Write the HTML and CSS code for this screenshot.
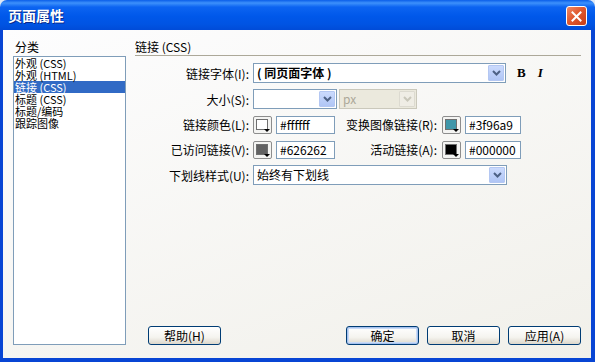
FILE: index.html
```html
<!DOCTYPE html>
<html>
  <head>
    <title>页面属性</title>
    <meta charset="UTF-8" />
    <link rel="stylesheet" href="styles.css">
  </head>
  <body>
    <div class="window">
      <div class="titlebar">
        <span class="title">页面属性</span>
        <button class="close" title="关闭">
          <svg width="11" height="11" viewBox="0 0 11 11"><path d="M1.5 1.5 L9.5 9.5 M9.5 1.5 L1.5 9.5" stroke="#fff" stroke-width="2" stroke-linecap="square" fill="none"/></svg>
        </button>
      </div>

      <div class="client">
        <div class="sidebar">
          <div class="caption">分类</div>
          <ul class="listbox">
            <li>外观 (CSS)</li>
            <li>外观 (HTML)</li>
            <li class="selected">链接 (CSS)</li>
            <li>标题 (CSS)</li>
            <li>标题/编码</li>
            <li>跟踪图像</li>
          </ul>
        </div>

        <div class="panel">
          <div class="panel-head">链接 (CSS)</div>

          <div class="form">
            <div class="row">
              <label class="label">链接字体(I):</label>
              <div class="select font-select">
                <span class="value bold">( 同页面字体 )</span>
                <span class="arrow"><svg width="9" height="6" viewBox="0 0 9 6"><path d="M1 1 L4.5 4.5 L8 1" stroke="#4d6185" stroke-width="2" fill="none"/></svg></span>
              </div>
              <span class="fmt-b">B</span>
              <span class="fmt-i">I</span>
            </div>

            <div class="row">
              <label class="label">大小(S):</label>
              <div class="select size-select">
                <span class="value"></span>
                <span class="arrow"><svg width="9" height="6" viewBox="0 0 9 6"><path d="M1 1 L4.5 4.5 L8 1" stroke="#4d6185" stroke-width="2" fill="none"/></svg></span>
              </div>
              <div class="select unit-select">
                <span class="value">px</span>
                <span class="arrow"><svg width="9" height="6" viewBox="0 0 9 6"><path d="M1 1 L4.5 4.5 L8 1" stroke="#c9c7ba" stroke-width="2" fill="none"/></svg></span>
              </div>
            </div>

            <div class="row short">
              <label class="label">链接颜色(L):</label>
              <span class="swatch"><i style="background:#ffffff"></i></span>
              <input class="hex" type="text" value="#ffffff" readonly />
              <label class="label2">变换图像链接(R):</label>
              <span class="swatch"><i style="background:#3f96a9"></i></span>
              <input class="hex hex2" type="text" value="#3f96a9" readonly />
            </div>

            <div class="row short">
              <label class="label">已访问链接(V):</label>
              <span class="swatch"><i style="background:#626262"></i></span>
              <input class="hex" type="text" value="#626262" readonly />
              <label class="label2">活动链接(A):</label>
              <span class="swatch"><i style="background:#000000"></i></span>
              <input class="hex hex2" type="text" value="#000000" readonly />
            </div>

            <div class="row">
              <label class="label">下划线样式(U):</label>
              <div class="select under-select">
                <span class="value">始终有下划线</span>
                <span class="arrow"><svg width="9" height="6" viewBox="0 0 9 6"><path d="M1 1 L4.5 4.5 L8 1" stroke="#4d6185" stroke-width="2" fill="none"/></svg></span>
              </div>
            </div>
          </div>

          <div class="buttons">
            <button class="btn help">帮助(H)</button>
            <button class="btn default">确定</button>
            <button class="btn">取消</button>
            <button class="btn">应用(A)</button>
          </div>
        </div>
      </div>
    </div>
  </body>
</html>
```

FILE: styles.css
```css
* {
  box-sizing: border-box;
}
body {
  margin: 0;
  background: #dfe8f5;
  font-family: "Noto Sans CJK SC", "Noto Sans", sans-serif;
  font-size: 12px;
  color: #000;
}
.window {
  width: 595px;
  height: 362px;
  display: flex;
  flex-direction: column;
}
.titlebar {
  height: 30px;
  display: flex;
  align-items: flex-start;
  justify-content: space-between;
  padding: 5px 8px 0 8px;
  border-radius: 7px 7px 0 0;
  background: linear-gradient(#0a5ee9 0, #3d91fb 3px, #0c64f1 7px, #0058ea 16px, #0054e3 24px, #004bd8 30px);
}
.title {
  color: #fff;
  font-weight: bold;
  font-size: 14px;
  line-height: 20px;
  text-shadow: 1px 1px #0a2a8a;
}
.close {
  width: 21px;
  height: 20px;
  margin-top: 1px;
  padding: 0;
  border: 1px solid #fff;
  border-radius: 3px;
  background: linear-gradient(135deg, #f08a66, #e0592f 45%, #c73d18);
  display: flex;
  align-items: center;
  justify-content: center;
}
.client {
  flex: 1;
  display: flex;
  gap: 9px;
  padding: 8px 10px 13px 10px;
  background: linear-gradient(160deg, #fdfdfe, #f1f0ea);
  border: solid #0845d4;
  border-width: 0 4px 4px 3px;
}
.sidebar {
  width: 113px;
  display: flex;
  flex-direction: column;
}
.caption {
  height: 18px;
  line-height: 18px;
  padding-left: 2px;
}
.listbox {
  flex: 1;
  margin: 0;
  padding: 0;
  list-style: none;
  background: #fff;
  border: 1px solid #7f9db9;
}
.listbox li {
  height: 12px;
  line-height: 12px;
  padding-left: 1px;
  font-size: 11px;
  white-space: nowrap;
}
.listbox li.selected {
  background: #316ac5;
  color: #fff;
}
.panel {
  flex: 1;
  display: flex;
  flex-direction: column;
}
.panel-head {
  height: 18px;
  line-height: 17px;
  border-bottom: 1px solid #aca899;
}
.form {
  margin-top: 7px;
  display: flex;
  flex-direction: column;
  gap: 6px;
}
.row {
  display: flex;
  align-items: center;
  height: 20px;
}
.row.short {
  height: 19px;
}
.label {
  width: 114px;
  margin-right: 4px;
  text-align: right;
  white-space: nowrap;
}
.label2 {
  width: 102px;
  margin-right: 5px;
  text-align: right;
  white-space: nowrap;
}
.select {
  display: flex;
  align-items: center;
  height: 20px;
  padding-left: 3px;
  border: 1px solid #7f9db9;
  background: #fff;
}
.select .value {
  line-height: 18px;
}
.select .value.bold {
  font-weight: bold;
}
.select .arrow {
  margin-left: auto;
  margin-right: 1px;
  width: 16px;
  height: 16px;
  border: 1px solid #b4c7f2;
  border-radius: 1px;
  background: linear-gradient(#cbdafd, #b0c5f5);
  display: flex;
  align-items: center;
  justify-content: center;
}
.font-select {
  width: 253px;
}
.size-select {
  width: 84px;
}
.unit-select {
  width: 78px;
  margin-left: 2px;
  background: #ebe9dd;
  border-color: #cac8bb;
  color: #aca899;
}
.unit-select .arrow {
  background: #efede5;
  border-color: #dcdad0;
}
.under-select {
  width: 254px;
}
.fmt-b {
  margin-left: 11px;
  font-family: "Liberation Serif", serif;
  font-weight: bold;
  font-size: 13px;
}
.fmt-i {
  margin-left: 12px;
  font-family: "Liberation Serif", serif;
  font-weight: bold;
  font-style: italic;
  font-size: 13px;
}
.swatch {
  position: relative;
  width: 19px;
  height: 18px;
  padding: 2px 3px 3px 2px;
  border: 1px solid #8d8d8d;
  border-radius: 2px;
  background: #f4f4f2;
}
.swatch i {
  display: block;
  height: 100%;
  border: 1px solid #6f6f6f;
}
.swatch::after {
  content: "";
  position: absolute;
  right: 1px;
  bottom: 1px;
  border-left: 3px solid transparent;
  border-right: 3px solid transparent;
  border-top: 3px solid #000;
}
.hex {
  width: 59px;
  height: 18px;
  margin: 0 0 0 4px;
  padding: 0 0 0 3px;
  border: 1px solid #7f9db9;
  background: #fff;
  font-family: "Noto Sans CJK SC", "Noto Sans", sans-serif;
  font-size: 12px;
  color: #000;
  outline: none;
}
.hex2 {
  width: 56px;
}
.buttons {
  margin-top: auto;
  display: flex;
  gap: 8px;
  padding-left: 13px;
}
.btn {
  width: 73px;
  height: 19px;
  padding: 0;
  border: 1px solid #003c74;
  border-radius: 3px;
  background: linear-gradient(#ffffff, #f5f4ef 60%, #dcd7cb);
  font-family: "Noto Sans CJK SC", "Noto Sans", sans-serif;
  font-size: 12px;
  line-height: 17px;
  color: #000;
}
.btn.help {
  margin-right: auto;
}
.btn.default {
  box-shadow: inset 0 0 0 1px #a6c2ee, inset 0 0 0 2px #c9daf6;
}
```
